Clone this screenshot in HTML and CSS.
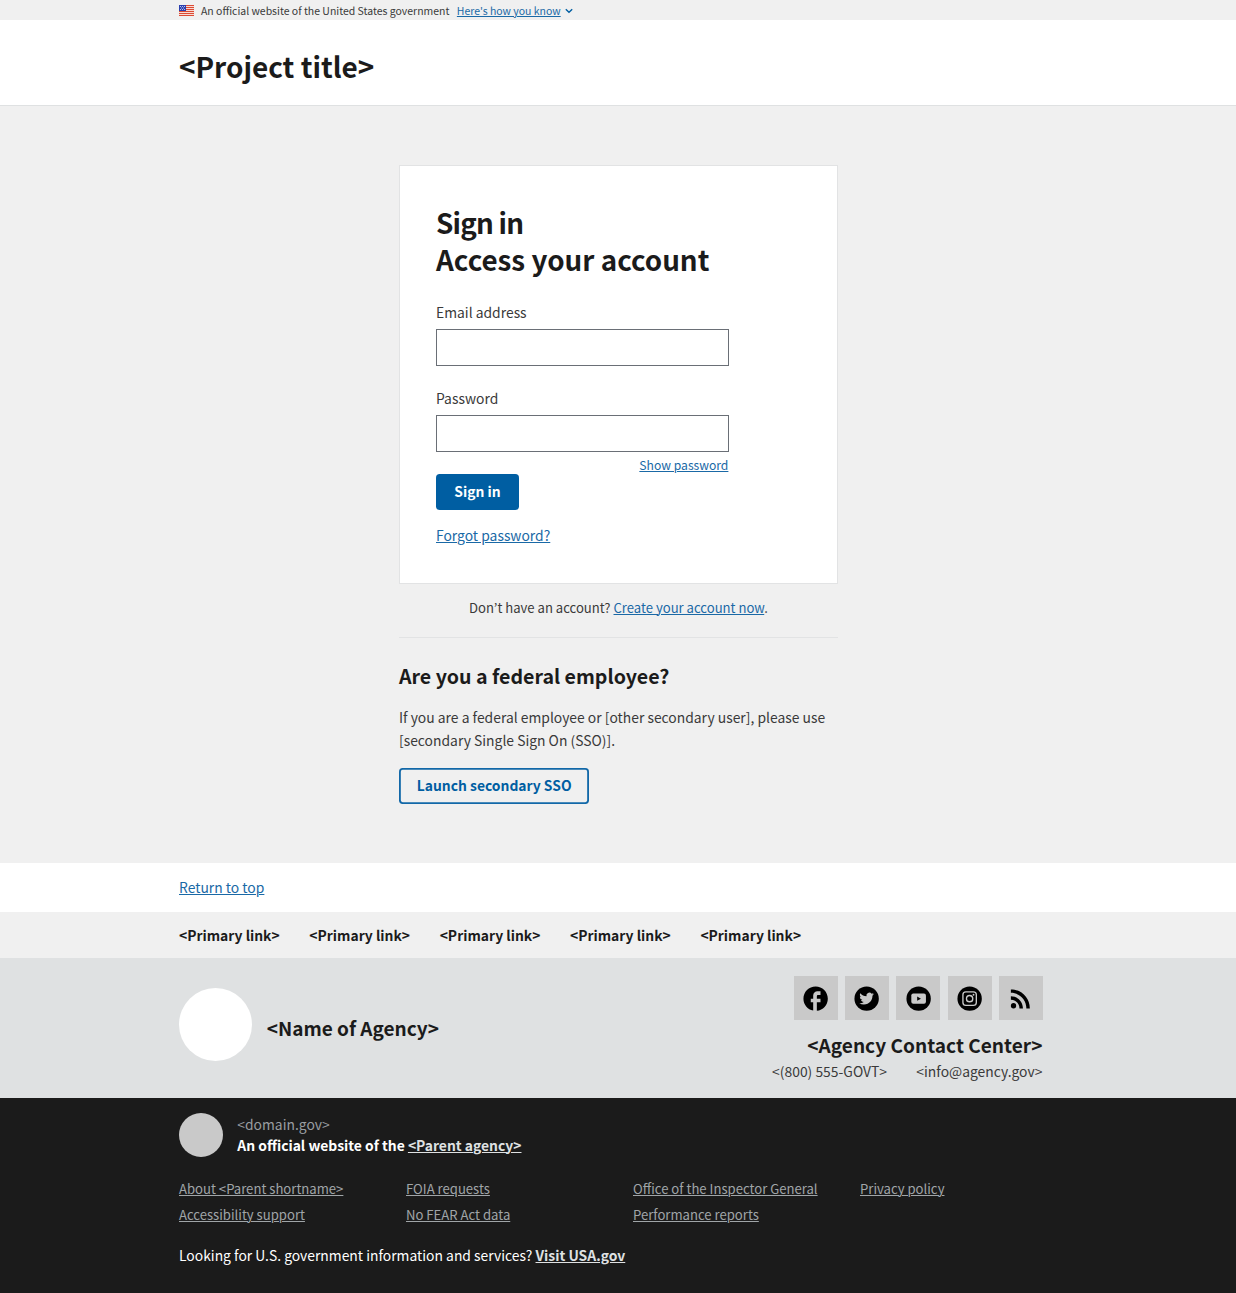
FILE: index.html
```
<!DOCTYPE html>
<html lang="en">
<head>
<meta charset="utf-8">
<title>Sign in</title>
<link rel="stylesheet" href="styles.css">
</head>
<body>
<div class="banner">
  <div class="container banner-inner">
    <svg class="flag" viewBox="0 0 15 11" aria-hidden="true">
      <rect width="15" height="11" fill="#f7d9d2"/>
      <path d="M0 .5h15M0 2.5h15M0 4.5h15M0 6.5h15M0 8.5h15M0 10.5h15" stroke="#dc4a33"/>
      <rect width="7" height="6" fill="#2a3fae"/>
      <path d="M1 1.5h1M3 1.5h1M5 1.5h1M2 3h1M4 3h1M1 4.5h1M3 4.5h1M5 4.5h1" stroke="#c6cdf0" stroke-width=".9"/>
    </svg>
    <span>An official website of the United States government</span>
    <a class="link banner-link" href="#">Here's how you know</a>
    <svg class="chevron" viewBox="0 0 8 6" aria-hidden="true"><path d="M.8 1.2l3.2 3 3.2-3" fill="none" stroke="#005ea2" stroke-width="1.4"/></svg>
  </div>
</div>
<header class="header">
  <div class="container"><div class="project-title">&lt;Project title&gt;</div></div>
</header>
<main class="main">
  <div class="column">
    <section class="card">
      <h1><span class="eyebrow">Sign in</span><br>Access your account</h1>
      <form class="form">
        <label for="email">Email address</label>
        <input id="email" type="email">
        <label for="password">Password</label>
        <input id="password" type="password">
        <a class="link show-password" href="#">Show password</a>
        <button class="button" type="button">Sign in</button>
        <a class="link forgot" href="#">Forgot password?</a>
      </form>
    </section>
    <p class="create">Don’t have an account? <a class="link" href="#">Create your account now</a>.</p>
    <section class="employee">
      <h2>Are you a federal employee?</h2>
      <p>If you are a federal employee or [other secondary user], please use<br>[secondary Single Sign On (SSO)].</p>
      <button class="button button-outline" type="button">Launch secondary SSO</button>
    </section>
  </div>
</main>
<footer>
  <div class="return"><div class="container"><a class="link" href="#">Return to top</a></div></div>
  <nav class="primary">
    <div class="container primary-links">
      <a href="#">&lt;Primary link&gt;</a>
      <a href="#">&lt;Primary link&gt;</a>
      <a href="#">&lt;Primary link&gt;</a>
      <a href="#">&lt;Primary link&gt;</a>
      <a href="#">&lt;Primary link&gt;</a>
    </div>
  </nav>
  <div class="secondary">
    <div class="container secondary-inner">
      <div class="agency">
        <div class="agency-logo"></div>
        <p class="agency-name">&lt;Name of Agency&gt;</p>
      </div>
      <div class="contact">
        <div class="social">
          <a href="#" aria-label="Facebook"><svg viewBox="0 0 24 24"><path d="M22 12c0-5.52-4.48-10-10-10S2 6.48 2 12c0 4.84 3.44 8.87 8 9.8V15H8v-3h2V9.5C10 7.57 11.57 6 13.5 6H16v3h-2c-.55 0-1 .45-1 1v2h3v3h-3v6.95c5.05-.5 9-4.76 9-9.95z"/></svg></a>
          <a href="#" aria-label="Twitter"><svg viewBox="0 0 24 24"><circle cx="12" cy="12" r="10"/><path class="cut" transform="translate(6 6) scale(.5)" d="M23.953 4.57a10 10 0 01-2.825.775 4.958 4.958 0 002.163-2.723c-.951.555-2.005.959-3.127 1.184a4.92 4.92 0 00-8.384 4.482C7.69 8.095 4.067 6.13 1.64 3.162a4.822 4.822 0 00-.666 2.475c0 1.71.87 3.213 2.188 4.096a4.904 4.904 0 01-2.228-.616v.06a4.923 4.923 0 003.946 4.827 4.996 4.996 0 01-2.212.085 4.936 4.936 0 004.604 3.417 9.867 9.867 0 01-6.102 2.105c-.39 0-.779-.023-1.17-.067a13.995 13.995 0 007.557 2.209c9.053 0 13.998-7.496 13.998-13.985 0-.21 0-.42-.015-.63A9.935 9.935 0 0024 4.59z"/></svg></a>
          <a href="#" aria-label="YouTube"><svg viewBox="0 0 24 24"><circle cx="12" cy="12" r="10"/><rect class="cut" x="6" y="7.8" width="12" height="8.4" rx="1.6"/><path d="M10.8 10.2v3.6l3.1-1.8z"/></svg></a>
          <a href="#" aria-label="Instagram"><svg viewBox="0 0 24 24"><circle cx="12" cy="12" r="10"/><rect class="ring" x="6.5" y="6.5" width="11" height="11" rx="2.4"/><circle class="ring" cx="12" cy="12" r="2.6"/><circle class="cut" cx="15.2" cy="8.8" r=".75"/></svg></a>
          <a href="#" aria-label="RSS"><svg viewBox="0 0 24 24"><circle cx="5.18" cy="18.82" r="2.18" transform="translate(1 -1)"/><path d="M4 4.44v2.83c7.03 0 12.73 5.7 12.73 12.73h2.83c0-8.59-6.97-15.56-15.56-15.56zm0 5.66v2.83c3.9 0 7.07 3.17 7.07 7.07h2.83c0-5.47-4.43-9.9-9.9-9.9z"/></svg></a>
        </div>
        <p class="contact-heading">&lt;Agency Contact Center&gt;</p>
        <div class="contact-info"><span>&lt;(800) 555-GOVT&gt;</span><span>&lt;info@agency.gov&gt;</span></div>
      </div>
    </div>
  </div>
  <div class="identifier">
    <div class="container">
      <div class="masthead">
        <div class="parent-logo"></div>
        <div class="identity">
          <p class="domain">&lt;domain.gov&gt;</p>
          <p class="disclaimer">An official website of the <a href="#">&lt;Parent agency&gt;</a></p>
        </div>
      </div>
      <div class="required-links">
        <a href="#">About &lt;Parent shortname&gt;</a>
        <a href="#">FOIA requests</a>
        <a href="#">Office of the Inspector General</a>
        <a href="#">Privacy policy</a>
        <a href="#">Accessibility support</a>
        <a href="#">No FEAR Act data</a>
        <a href="#">Performance reports</a>
      </div>
      <p class="usagov">Looking for U.S. government information and services? <a href="#">Visit USA.gov</a></p>
    </div>
  </div>
</footer>
</body>
</html>
```
FILE: styles.css
```
* { box-sizing: border-box; }

body {
  margin: 0;
  background: #1b1b1b;
  color: #1b1b1b;
  font-family: "Noto Sans CJK JP", "Noto Sans", sans-serif;
  font-size: 13.88px;
  line-height: 20px;
}

h1, h2, p { margin: 0; }

a {
  color: inherit;
  text-decoration-thickness: 1px;
  text-underline-offset: 1px;
}

.link { color: #1a69a6; }

.container {
  width: 864px;
  margin-left: 179px;
}

/* Government banner */
.banner {
  height: 20px;
  padding-top: 0.5px;
  background: #f0f0f0;
  color: #3a3a3a;
  font-size: 10.48px;
}

.banner-inner { display: flex; align-items: center; }
.flag { width: 15px; height: 11px; margin-right: 7px; }
.banner-link { margin-left: 7.5px; }
.chevron { width: 8px; height: 6px; margin-left: 4px; margin-top: 1px; }

/* Header */
.header {
  height: 86px;
  padding-top: 26px;
  background: #fff;
  border-bottom: 1px solid #dfe1e2;
}

.project-title {
  font-size: 27.95px;
  font-weight: 700;
  line-height: 40px;
}

/* Sign-in column */
.main {
  padding: 59px 0;
  background: #f0f0f0;
}

.column { width: 439px; margin-left: 399px; }

.card {
  padding: 37.5px 36px 38px;
  background: #fff;
  border: 1px solid #e2e3e4;
}

h1 { font-size: 27.8px; line-height: 37.3px; }
.eyebrow { letter-spacing: -0.8px; }

.form {
  display: flex;
  flex-direction: column;
  align-items: flex-start;
  width: 293px;
}

.form label { margin-top: 24px; color: #3a3a3a; }
.form input + label { margin-top: 22px; }

.form input {
  width: 293px;
  height: 37px;
  margin: 7px 0 0;
  padding: 7px;
  border: 1px solid #6a6f76;
  border-radius: 0;
  background: #fff;
}

.show-password {
  align-self: flex-end;
  margin: 4px 0.6px 0 0;
  font-size: 12.15px;
  line-height: 17px;
}

.button {
  height: 35.5px;
  margin: 1px 0 0;
  padding: 0 18.3px 1px;
  border: 0;
  border-radius: 3.66px;
  background: #005ea2;
  color: #fff;
  font: 700 13.86px/20px "Noto Sans CJK JP", "Noto Sans", sans-serif;
}

.forgot { margin-top: 15.5px; }

.create {
  margin-top: 13.5px;
  padding-bottom: 19.5px;
  border-bottom: 1px solid #e2e3e4;
  color: #3a3a3a;
  font-size: 13.1px;
  text-align: center;
}

h2 {
  margin: 24.5px 0 17.5px;
  font-size: 19.6px;
  line-height: 26px;
}

.employee p { color: #3a3a3a; line-height: 23px; white-space: nowrap; }

.button-outline {
  display: block;
  margin-top: 16px;
  padding: 0 17.8px 1px;
  background: transparent;
  box-shadow: inset 0 0 0 1.83px #1268a8;
  color: #005ea2;
}

/* Footer */
.return {
  height: 49.8px;
  padding-top: 14.8px;
  background: #fff;
}

.primary {
  height: 46px;
  padding-top: 12.7px;
  background: #f0f0f0;
}

.primary-links { display: flex; gap: 29.65px; }

.primary-links a { font-weight: 700; text-decoration: none; }

.secondary {
  height: 140px;
  padding-top: 18px;
  background: #dfe1e2;
}

.secondary-inner { display: flex; justify-content: space-between; }

.agency {
  display: flex;
  align-items: center;
  gap: 14.7px;
  height: 73px;
  margin-top: 12px;
}

.agency-logo {
  width: 73px;
  height: 73px;
  border-radius: 50%;
  background: #fff;
}

.agency-name {
  padding-top: 6px;
  font-size: 19.03px;
  font-weight: 700;
  line-height: 30px;
}

.contact {
  display: flex;
  flex-direction: column;
  align-items: flex-end;
}

.social { display: flex; gap: 7.3px; }

.social a {
  display: flex;
  align-items: center;
  justify-content: center;
  width: 44px;
  height: 44px;
  background: #c9c9c9;
}

.social svg { width: 29.25px; height: 29.25px; fill: #000; }
.social .cut { fill: #c9c9c9; }
.social .ring { fill: none; stroke: #c9c9c9; stroke-width: 1.1; }

.contact-heading {
  margin: 11.5px 0.6px 0 0;
  font-size: 19.08px;
  font-weight: 700;
  line-height: 26px;
}

.contact-info {
  display: flex;
  gap: 29.3px;
  margin: 3px 0.6px 0 0;
  color: #3a3a3a;
}

/* Identifier */
.identifier {
  height: 195px;
  padding-top: 14.5px;
  background: #1b1b1b;
  color: #fff;
}

.masthead { display: flex; gap: 14.3px; }

.parent-logo {
  width: 44px;
  height: 44px;
  border-radius: 50%;
  background: #c9c9c9;
}

.identity { padding-top: 1.2px; }
.domain { color: #999da0; }
.disclaimer { margin-top: 0.5px; font-weight: 700; }
.disclaimer a, .usagov a { color: #dfe1e2; font-weight: 700; }

.required-links {
  display: grid;
  grid-template-columns: repeat(4, 227px);
  justify-items: start;
  row-gap: 5.7px;
  margin-top: 22.3px;
  color: #a0a5a8;
  font-size: 13.12px;
  white-space: nowrap;
}

.usagov { margin-top: 19.8px; }
```
